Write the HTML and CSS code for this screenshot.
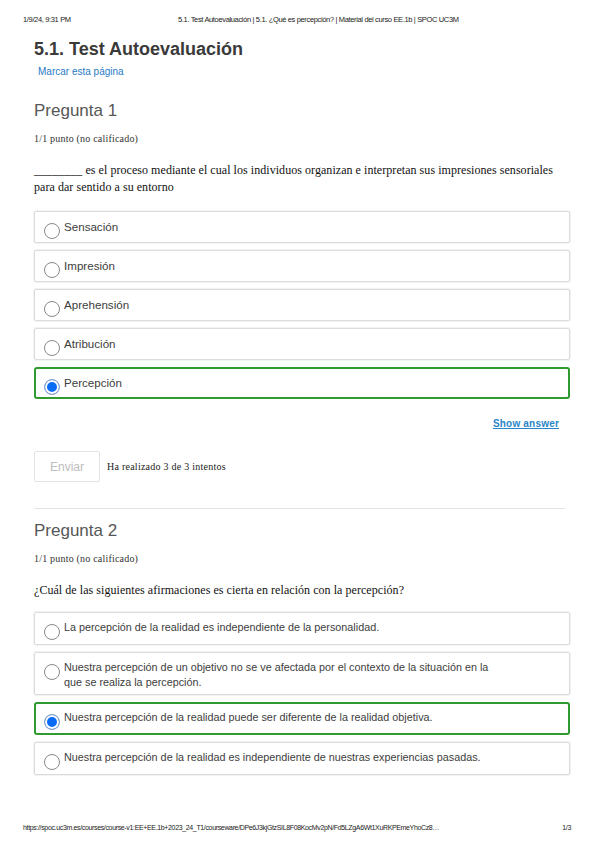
FILE: index.html
```html
<!DOCTYPE html>
<html lang="es">
<head>
<meta charset="utf-8">
<title>5.1. Test Autoevaluación</title>
<link rel="stylesheet" href="styles.css">
</head>
<body>
<header class="print-head">
  <span class="ph-date">1/9/24, 9:31 PM</span>
  <span class="ph-title">5.1. Test Autoevaluación | 5.1. ¿Qué es percepción? | Material del curso EE.1b | SPOC UC3M</span>
</header>

<main class="content">
  <h1 class="page-title">5.1. Test Autoevaluación</h1>
  <a class="bookmark" href="#">Marcar esta página</a>

  <section class="problem first">
    <h2 class="q-title">Pregunta 1</h2>
    <p class="points">1/1 punto (no calificado)</p>
    <p class="q-text">________ es el proceso mediante el cual los individuos organizan e interpretan sus impresiones sensoriales para dar sentido a su entorno</p>
    <div class="choices">
      <label class="choice"><span class="radio"></span><span class="c-text">Sensación</span></label>
      <label class="choice"><span class="radio"></span><span class="c-text">Impresión</span></label>
      <label class="choice"><span class="radio"></span><span class="c-text">Aprehensión</span></label>
      <label class="choice"><span class="radio"></span><span class="c-text">Atribución</span></label>
      <label class="choice correct"><span class="radio checked"></span><span class="c-text">Percepción</span></label>
    </div>
    <div class="show-row"><a class="show" href="#">Show answer</a></div>
    <div class="submit-row">
      <button class="submit" type="button">Enviar</button>
      <span class="attempts">Ha realizado 3 de 3 intentos</span>
    </div>
  </section>

  <hr class="divider">

  <section class="problem second">
    <h2 class="q-title">Pregunta 2</h2>
    <p class="points">1/1 punto (no calificado)</p>
    <p class="q-text q2">¿Cuál de las siguientes afirmaciones es cierta en relación con la percepción?</p>
    <div class="choices">
      <label class="choice"><span class="radio"></span><span class="c-text">La percepción de la realidad es independiente de la personalidad.</span></label>
      <label class="choice"><span class="radio"></span><span class="c-text">Nuestra percepción de un objetivo no se ve afectada por el contexto de la situación en la que se realiza la percepción.</span></label>
      <label class="choice correct"><span class="radio checked"></span><span class="c-text">Nuestra percepción de la realidad puede ser diferente de la realidad objetiva.</span></label>
      <label class="choice"><span class="radio"></span><span class="c-text">Nuestra percepción de la realidad es independiente de nuestras experiencias pasadas.</span></label>
    </div>
  </section>
</main>

<footer class="print-foot">
  <span class="pf-url">https://spoc.uc3m.es/courses/course-v1:EE+EE.1b+2023_24_T1/courseware/DPe6J3kjGtzSIL8F08KocMv2pN/Fd5LZgA6Wt1XuRKPEmeYhoCz8…</span>
  <span class="pf-page">1/3</span>
</footer>
</body>
</html>
```

FILE: styles.css
```css
html, body {
  margin: 0;
  padding: 0;
  background: #fff;
}
body {
  width: 599px;
  height: 848px;
  position: relative;
  font-family: "Liberation Sans", Arial, sans-serif;
  color: #333;
}

.print-head {
  display: flex;
  align-items: center;
  height: 12px;
  padding: 13px 23px 0 23px;
  font-size: 7.5px;
  letter-spacing: -0.35px;
  color: #222;
}
.ph-date { width: 155px; }
.ph-title { white-space: nowrap; }

.content {
  width: 536px;
  padding: 0 29px 0 34px;
}

.page-title {
  margin: 13px 0 0 0;
  font-size: 18px;
  line-height: 22px;
  font-weight: bold;
  color: #3a3a3a;
}
.bookmark {
  display: block;
  margin: 5px 0 0 4px;
  font-size: 10px;
  line-height: 14px;
  color: #1f7ac6;
  text-decoration: none;
}

.problem.first { margin-top: 22px; }
.q-title {
  margin: 0;
  font-size: 17px;
  line-height: 20px;
  font-weight: normal;
  color: #575757;
}
.points {
  margin: 12px 0 0 0;
  font-family: "Liberation Serif", "Times New Roman", serif;
  font-size: 10px;
  line-height: 12px;
  letter-spacing: 0.2px;
  color: #333;
}
.q-text {
  margin: 17px 0 0 0;
  font-family: "Liberation Serif", "Times New Roman", serif;
  font-size: 12px;
  line-height: 17px;
  letter-spacing: 0.05px;
  color: #111;
}
.q-text.q2 {
  letter-spacing: 0.05px;
}

.choices {
  display: flex;
  flex-direction: column;
  gap: 7px;
  margin-top: 15px;
}
.second .choices { margin-top: 13px; }
.choice {
  display: flex;
  align-items: flex-start;
  gap: 4px;
  padding: 7px 8px 3px 9px;
  border: 1px solid #dcdcdc;
  border-radius: 2px;
  box-shadow: 0 0 0 1px #f3f3f3;
  font-size: 11.6px;
  line-height: 16px;
  color: #3d3d3d;
}
.second .choice {
  font-size: 10.8px;
  line-height: 15px;
  padding-bottom: 4px;
}
.c-text { max-width: 440px; }
.choice.correct {
  border: 2px solid #2f9a2f;
  padding-top: 6px;
  padding-left: 8px;
  padding-bottom: 2px;
  border-radius: 3px;
  box-shadow: none;
}
.second .choice.correct { padding-bottom: 3px; }
.radio {
  flex: none;
  width: 14px;
  height: 14px;
  margin-top: 4px;
  border: 1px solid #8a8a8a;
  border-radius: 50%;
  background: #fff;
}
.radio.checked {
  border-color: #8fa4c4;
  background: #0a6cf5;
  box-shadow: inset 0 0 0 2px #fff;
}

.show-row {
  display: flex;
  justify-content: flex-end;
  margin-top: 18px;
  padding-right: 11px;
}
.show {
  font-size: 10px;
  line-height: 14px;
  font-weight: bold;
  color: #2a86c8;
  text-decoration: underline;
  letter-spacing: 0.2px;
}

.submit-row {
  display: flex;
  align-items: center;
  gap: 7px;
  margin-top: 20px;
}
.submit {
  width: 66px;
  height: 31px;
  padding: 0;
  border: 1px solid #e3e3e3;
  border-radius: 2px;
  background: #fff;
  font-family: "Liberation Sans", Arial, sans-serif;
  font-size: 12px;
  color: #bdbdbd;
}
.attempts {
  font-family: "Liberation Serif", "Times New Roman", serif;
  font-size: 10px;
  letter-spacing: 0.25px;
  color: #222;
}

.divider {
  margin: 26px 5px 0 0;
  border: none;
  border-top: 1px solid #e2e2e2;
  height: 0;
}
.problem.second { margin-top: 12px; }

.print-foot {
  position: absolute;
  left: 23px;
  right: 28px;
  top: 824px;
  display: flex;
  justify-content: space-between;
  font-size: 7px;
  letter-spacing: -0.35px;
  color: #222;
  white-space: nowrap;
}
```
